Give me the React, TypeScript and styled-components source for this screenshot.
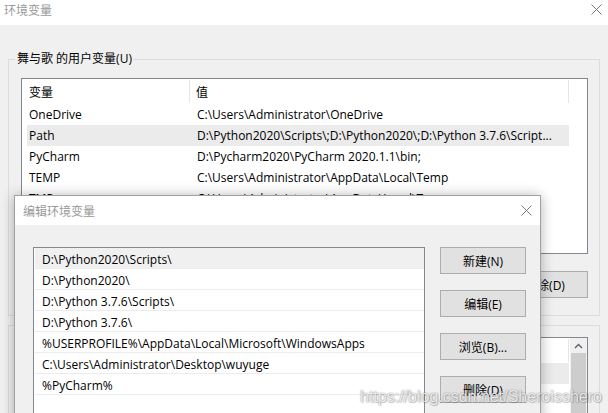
import React from 'react';
import styled, { createGlobalStyle } from 'styled-components';

const Global = createGlobalStyle`
  html, body { margin: 0; padding: 0; background: #f0f0f0; }
  body {
    font-family: "Open Sans", "Noto Sans CJK SC", sans-serif;
    font-size: 12px;
    color: #000;
  }
  #root { width: 608px; height: 413px; }
`;

const Screen = styled.div`
  position: relative;
  width: 608px;
  height: 413px;
  overflow: hidden;
  background: #f0f0f0;
`;

const Window = styled.div`
  display: flex;
  flex-direction: column;
  width: 100%;
  height: 100%;
`;

const MainTitleBar = styled.div`
  height: 25px;
  background: #fff;
  display: flex;
  align-items: flex-start;
  justify-content: space-between;
  padding: 2px 6px 0 4px;
  box-sizing: border-box;
  flex-shrink: 0;
`;

const TitleText = styled.span`
  color: #999;
  font-size: 12px;
  line-height: 16px;
  font-family: "Noto Sans CJK SC", sans-serif;
`;

const CloseIcon = styled.svg<{ $top: number }>`
  width: 11px;
  height: 11px;
  margin-top: ${p => p.$top}px;
  flex-shrink: 0;
`;

const Body = styled.div`
  flex: 1;
  display: flex;
  flex-direction: column;
  padding: 26px 8px 0 8px;
`;

const Group = styled.fieldset<{ $mt: number }>`
  margin: ${p => p.$mt}px 0 0 0;
  padding: 11px 11px 17px 6px;
  border: 1px solid #dcdcdc;
  min-width: 0;
  display: flex;
  flex-direction: column;
`;

const Legend = styled.legend`
  padding: 0 2px;
  line-height: 16px;
  font-size: 12px;
`;

const ListBox = styled.div<{ $h?: number }>`
  margin-left: 6px;
  border: 1px solid #828790;
  background: #fff;
  height: ${p => (p.$h ? `${p.$h}px` : 'auto')};
  box-sizing: border-box;
  display: flex;
  overflow: hidden;
`;

const ListMain = styled.div`
  flex: 1;
  display: flex;
  flex-direction: column;
  min-width: 0;
`;

const HeaderRow = styled.div`
  display: flex;
  height: 25px;
  align-items: stretch;
  flex-shrink: 0;
`;

const HeaderCell = styled.div<{ $w: number; $pl: number }>`
  width: ${p => p.$w}px;
  padding-left: ${p => p.$pl}px;
  box-sizing: border-box;
  display: flex;
  align-items: center;
  border-right: 1px solid #e5e5e5;
  margin: 1px 0;
  flex-shrink: 0;
`;

const VarRow = styled.div<{ $sel?: boolean }>`
  display: flex;
  height: 21px;
  align-items: center;
  margin-left: 5px;
  width: 542px;
  background: ${p => (p.$sel ? '#ebebeb' : 'transparent')};
  flex-shrink: 0;
`;

const VarCell = styled.div<{ $w: number; $pl: number }>`
  width: ${p => p.$w}px;
  padding-left: ${p => p.$pl}px;
  box-sizing: border-box;
  white-space: nowrap;
  overflow: hidden;
  flex-shrink: 0;
`;

const ButtonRow = styled.div`
  display: flex;
  justify-content: flex-end;
  margin-top: 17px;
`;

const WinButton = styled.button`
  width: 86px;
  height: 27px;
  box-sizing: border-box;
  background: #e1e1e1;
  border: 1px solid #adadad;
  border-radius: 0;
  font-family: "Open Sans", "Noto Sans CJK SC", sans-serif;
  font-size: 12px;
  color: #000;
  padding: 0;
  display: flex;
  align-items: center;
  justify-content: center;
`;

const ScrollBar = styled.div`
  width: 17px;
  background: #f0f0f0;
  display: flex;
  flex-direction: column;
  align-items: center;
  flex-shrink: 0;
`;

const ScrollArrow = styled.div`
  height: 18px;
  display: flex;
  align-items: center;
  justify-content: center;
`;

const ScrollThumb = styled.div`
  width: 15px;
  height: 120px;
  background: #cdcdcd;
`;

const Dialog = styled.div`
  position: absolute;
  left: 14px;
  top: 195px;
  width: 527px;
  height: 260px;
  box-sizing: border-box;
  border: 1px solid #a0a0a0;
  background: #f0f0f0;
  box-shadow: 0 1px 12px rgba(0, 0, 0, 0.3);
  display: flex;
  flex-direction: column;
`;

const DialogTitleBar = styled.div`
  height: 29px;
  background: #fff;
  display: flex;
  align-items: center;
  justify-content: space-between;
  padding: 0 8px 0 8px;
  flex-shrink: 0;
`;

const DialogBody = styled.div`
  display: flex;
  padding: 22px 13px 0 18px;
  gap: 15px;
`;

const PathList = styled.div`
  width: 392px;
  height: 220px;
  box-sizing: border-box;
  border: 1px solid #828790;
  background: #fff;
  padding-left: 1px;
  display: flex;
  flex-direction: column;
`;

const PathRow = styled.div<{ $sel?: boolean }>`
  height: 21px;
  box-sizing: border-box;
  border-bottom: 1px solid #ececec;
  padding-left: 7px;
  display: flex;
  align-items: center;
  padding-top: 2px;
  white-space: nowrap;
  background: ${p => (p.$sel ? '#f0f0f0' : '#fff')};
  flex-shrink: 0;
`;

const ButtonColumn = styled.div`
  display: flex;
  flex-direction: column;
  gap: 16px;
`;

const Watermark = styled.div`
  position: absolute;
  left: 360px;
  top: 387px;
  font-family: "Liberation Sans", Arial, sans-serif;
  font-size: 16px;
  line-height: 20px;
  color: rgba(255, 255, 255, 0.85);
  text-shadow: 0 0 1.5px rgba(0, 0, 0, 0.55), 1px 1px 1px rgba(0, 0, 0, 0.15);
  white-space: nowrap;
  pointer-events: none;
`;

const Close: React.FC<{ top?: number }> = ({ top = 0 }) => (
  <CloseIcon $top={top} viewBox="0 0 11 11">
    <path d="M0.5 0.5 L10.5 10.5 M10.5 0.5 L0.5 10.5" stroke="#7a7a7a" strokeWidth="1" fill="none" />
  </CloseIcon>
);

const userVars = [
  { name: 'OneDrive', value: 'C:\\Users\\Administrator\\OneDrive' },
  { name: 'Path', value: 'D:\\Python2020\\Scripts\\;D:\\Python2020\\;D:\\Python 3.7.6\\Script...', sel: true },
  { name: 'PyCharm', value: 'D:\\Pycharm2020\\PyCharm 2020.1.1\\bin;' },
  { name: 'TEMP', value: 'C:\\Users\\Administrator\\AppData\\Local\\Temp' },
  { name: 'TMP', value: 'C:\\Users\\Administrator\\AppData\\Local\\Temp' },
];

const paths = [
  'D:\\Python2020\\Scripts\\',
  'D:\\Python2020\\',
  'D:\\Python 3.7.6\\Scripts\\',
  'D:\\Python 3.7.6\\',
  '%USERPROFILE%\\AppData\\Local\\Microsoft\\WindowsApps',
  'C:\\Users\\Administrator\\Desktop\\wuyuge',
  '%PyCharm%',
];

export default function App() {
  return (
    <>
      <Global />
      <Screen>
        <Window>
          <MainTitleBar>
            <TitleText>环境变量</TitleText>
            <Close top={2} />
          </MainTitleBar>
          <Body>
            <Group $mt={0}>
              <Legend>舞与歌 的用户变量(U)</Legend>
              <ListBox $h={176}>
                <ListMain>
                  <HeaderRow>
                    <HeaderCell $w={168} $pl={7}>变量</HeaderCell>
                    <HeaderCell $w={379} $pl={6}>值</HeaderCell>
                  </HeaderRow>
                  {userVars.map(v => (
                    <VarRow key={v.name} $sel={v.sel}>
                      <VarCell $w={163} $pl={2}>{v.name}</VarCell>
                      <VarCell $w={379} $pl={7}>{v.value}</VarCell>
                    </VarRow>
                  ))}
                </ListMain>
              </ListBox>
              <ButtonRow>
                <WinButton>删除(D)</WinButton>
              </ButtonRow>
            </Group>
            <Group $mt={9}>
              <Legend> </Legend>
              <ListBox $h={120}>
                <ListMain>
                  <HeaderRow>
                    <HeaderCell $w={168} $pl={7} />
                    <HeaderCell $w={379} $pl={6} />
                  </HeaderRow>
                  <VarRow $sel />
                </ListMain>
                <ScrollBar>
                  <ScrollArrow>
                    <svg width="9" height="6" viewBox="0 0 9 6">
                      <path d="M1 5 L4.5 1.5 L8 5" stroke="#606060" strokeWidth="1.4" fill="none" />
                    </svg>
                  </ScrollArrow>
                  <ScrollThumb />
                </ScrollBar>
              </ListBox>
            </Group>
          </Body>
        </Window>

        <Dialog>
          <DialogTitleBar>
            <TitleText>编辑环境变量</TitleText>
            <Close />
          </DialogTitleBar>
          <DialogBody>
            <PathList>
              {paths.map((p, i) => (
                <PathRow key={p} $sel={i === 0}>{p}</PathRow>
              ))}
            </PathList>
            <ButtonColumn>
              <WinButton>新建(N)</WinButton>
              <WinButton>编辑(E)</WinButton>
              <WinButton>浏览(B)...</WinButton>
              <WinButton>删除(D)</WinButton>
            </ButtonColumn>
          </DialogBody>
        </Dialog>

        <Watermark>https://blog.csdn.net/Sheroisshero</Watermark>
      </Screen>
    </>
  );
}
